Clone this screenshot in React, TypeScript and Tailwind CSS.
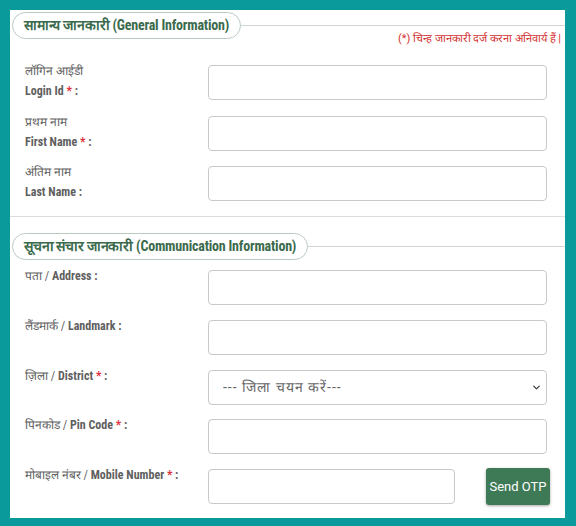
import { ChevronDown } from "lucide-react";

const labelFont = "font-['Roboto_Condensed','Liberation_Sans_Narrow','Roboto',sans-serif]";

function Legend({ text, sub }: { text: string; sub: string }) {
  return (
    <div className="flex items-center">
      <div
        className={`h-[27px] shrink-0 flex items-center whitespace-nowrap px-[11px] rounded-full border border-[#b9cbbf] bg-white text-[14px] font-bold tracking-[-0.2px] text-[#3b6a4c] ${labelFont}`}
      >
        <span>{text}</span>
        <span className="ml-[3px]">{sub}</span>
      </div>
      <div className="flex-1 h-px bg-[#cfd6d2]" />
    </div>
  );
}

function Req() {
  return <span className="text-[#e0313b]"> *</span>;
}

function TwoLineLabel({ hi, en, req }: { hi: string; en: string; req?: boolean }) {
  return (
    <div className={`w-[183px] shrink-0 -mt-[4px] -mb-[4px] leading-[20px] text-[12px] text-[#5f5f5f] ${labelFont}`}>
      <div>{hi}</div>
      <div className="font-bold">
        {en}
        {req && <Req />} :
      </div>
    </div>
  );
}

function OneLineLabel({ hi, en, req }: { hi: string; en: string; req?: boolean }) {
  return (
    <div className={`w-[183px] shrink-0 -mt-[4px] leading-[20px] text-[12px] text-[#5f5f5f] ${labelFont}`}>
      <span>{hi} / </span>
      <span className="font-bold">
        {en}
        {req && <Req />} :
      </span>
    </div>
  );
}

const inputClass = "h-[35px] rounded-[4px] border border-[#c9c9c9] bg-white";

export default function App() {
  return (
    <main className="min-h-[526px] bg-[#0a9a9b] p-[10px] pb-[9px] font-['Roboto',sans-serif]">
      <div className="w-[555px] bg-white pt-[2px] pb-[13px]">
        <div className="pl-[2px]">
          <Legend text="सामान्य जानकारी" sub="(General Information)" />
        </div>
        <p className="-mt-[7px] pr-[4px] text-right text-[11px] leading-[14px] text-[#d3302f]">
          (*) चिन्ह जानकारी दर्ज करना अनिवार्य हैं |
        </p>

        <div className="mt-[19px] pl-[15px] pr-[18px] flex flex-col gap-[15.5px]">
          <div className="flex items-start">
            <TwoLineLabel hi="लॉगिन आईडी" en="Login Id" req />
            <input className={`${inputClass} flex-1`} />
          </div>
          <div className="flex items-start">
            <TwoLineLabel hi="प्रथम नाम" en="First Name" req />
            <input className={`${inputClass} flex-1`} />
          </div>
          <div className="flex items-start">
            <TwoLineLabel hi="अंतिम नाम" en="Last Name" />
            <input className={`${inputClass} flex-1`} />
          </div>
        </div>

        <div className="mt-[15px] h-px bg-[#dcdcdc]" />

        <div className="mt-[16px] pl-[2px]">
          <Legend text="सूचना संचार जानकारी" sub="(Communication Information)" />
        </div>

        <div className="mt-[10px] pl-[15px] pr-[18px] flex flex-col gap-[14.8px]">
          <div className="flex items-start">
            <OneLineLabel hi="पता" en="Address" />
            <input className={`${inputClass} flex-1`} />
          </div>
          <div className="flex items-start">
            <OneLineLabel hi="लैंडमार्क" en="Landmark" />
            <input className={`${inputClass} flex-1`} />
          </div>
          <div className="flex items-start">
            <OneLineLabel hi="ज़िला" en="District" req />
            <div className="relative flex-1">
              <select className={`${inputClass} w-full appearance-none pl-[14px] text-[14px] tracking-[1px] text-[#666]`}>
                <option>--- जिला चयन करें---</option>
              </select>
              <ChevronDown
                size={11}
                strokeWidth={3}
                className="absolute right-[5px] top-[12px] text-[#444] pointer-events-none"
              />
            </div>
          </div>
          <div className="flex items-start">
            <OneLineLabel hi="पिनकोड" en="Pin Code" req />
            <input className={`${inputClass} flex-1`} />
          </div>
          <div className="flex items-start">
            <OneLineLabel hi="मोबाइल नंबर" en="Mobile Number" req />
            <input className={`${inputClass} w-[247px]`} />
            <button className="ml-[31px] -mt-[1px] -mr-[3px] w-[64px] h-[37px] rounded-[3px] bg-[#3f7a57] text-white text-[13px] shadow-[0_1px_3px_rgba(0,0,0,0.35)]">
              Send OTP
            </button>
          </div>
        </div>
      </div>
    </main>
  );
}
